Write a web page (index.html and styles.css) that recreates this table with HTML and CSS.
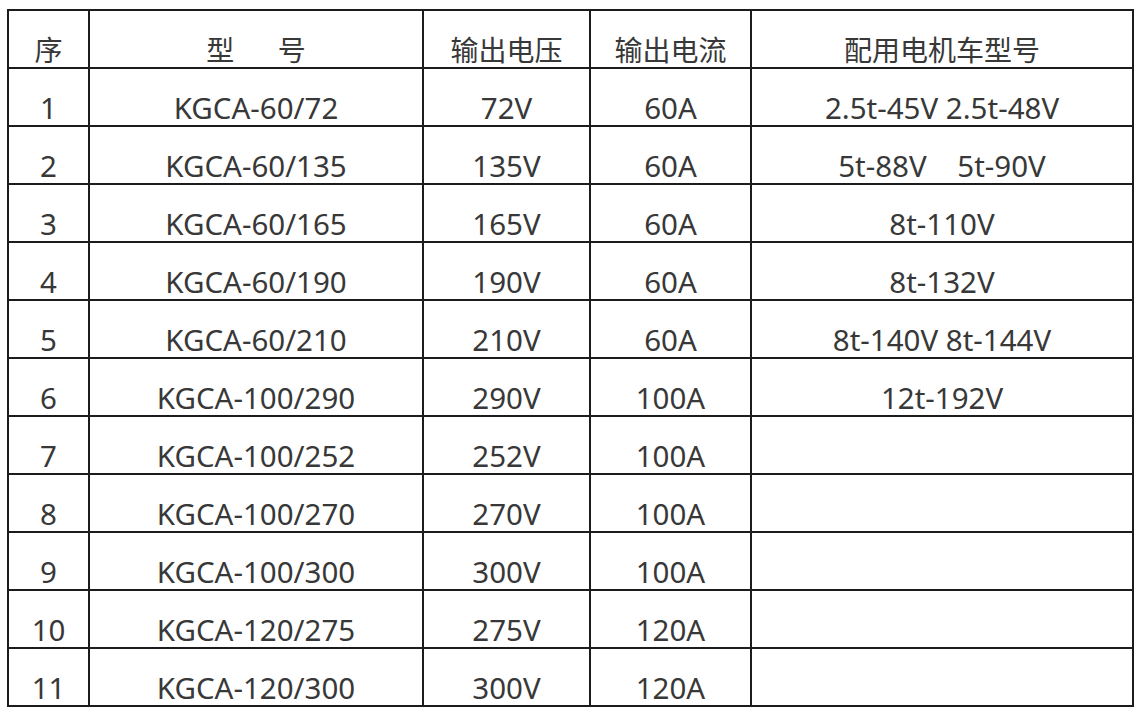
FILE: index.html
```html
<!DOCTYPE html>
<html lang="zh-CN">
<head>
<meta charset="utf-8">
<title>KGCA</title>
<link rel="stylesheet" href="styles.css">
</head>
<body>
<table class="spec">
  <colgroup>
    <col class="c-no">
    <col class="c-model">
    <col class="c-volt">
    <col class="c-amp">
    <col class="c-loco">
  </colgroup>
  <thead>
    <tr><th>序</th><th class="pre">型      号</th><th>输出电压</th><th>输出电流</th><th>配用电机车型号</th></tr>
  </thead>
  <tbody>
    <tr><td>1</td><td>KGCA-60/72</td><td>72V</td><td>60A</td><td>2.5t-45V 2.5t-48V</td></tr>
    <tr><td>2</td><td>KGCA-60/135</td><td>135V</td><td>60A</td><td class="pre">5t-88V    5t-90V</td></tr>
    <tr><td>3</td><td>KGCA-60/165</td><td>165V</td><td>60A</td><td>8t-110V</td></tr>
    <tr><td>4</td><td>KGCA-60/190</td><td>190V</td><td>60A</td><td>8t-132V</td></tr>
    <tr><td>5</td><td>KGCA-60/210</td><td>210V</td><td>60A</td><td>8t-140V 8t-144V</td></tr>
    <tr><td>6</td><td>KGCA-100/290</td><td>290V</td><td>100A</td><td>12t-192V</td></tr>
    <tr><td>7</td><td>KGCA-100/252</td><td>252V</td><td>100A</td><td></td></tr>
    <tr><td>8</td><td>KGCA-100/270</td><td>270V</td><td>100A</td><td></td></tr>
    <tr><td>9</td><td>KGCA-100/300</td><td>300V</td><td>100A</td><td></td></tr>
    <tr><td>10</td><td>KGCA-120/275</td><td>275V</td><td>120A</td><td></td></tr>
    <tr><td>11</td><td>KGCA-120/300</td><td>300V</td><td>120A</td><td></td></tr>
  </tbody>
</table>
</body>
</html>
```
FILE: styles.css
```css
html, body {
  margin: 0;
  padding: 0;
  background: #ffffff;
}
body {
  padding: 9px 0 0 7px;
  font-family: "Noto Sans", "Noto Sans CJK SC", sans-serif;
  color: #383838;
}
.spec {
  border-collapse: separate;
  border-spacing: 0;
  table-layout: fixed;
  width: 1127px;
  border-left: 2px solid #1c1c1c;
  border-top: 2px solid #1c1c1c;
}
.c-no { width: 81px; }
.c-model { width: 334px; }
.c-volt { width: 167px; }
.c-amp { width: 161px; }
.c-loco { width: 382px; }
.spec th,
.spec td {
  box-sizing: border-box;
  height: 58px;
  padding: 0 0 3px 0;
  border-right: 2px solid #1c1c1c;
  border-bottom: 2px solid #1c1c1c;
  text-align: center;
  vertical-align: bottom;
  font-size: 28px;
  font-weight: normal;
  line-height: 28px;
  white-space: nowrap;
}
.spec td {
  font-size: 29.5px;
}
.pre { white-space: pre !important; }
```
